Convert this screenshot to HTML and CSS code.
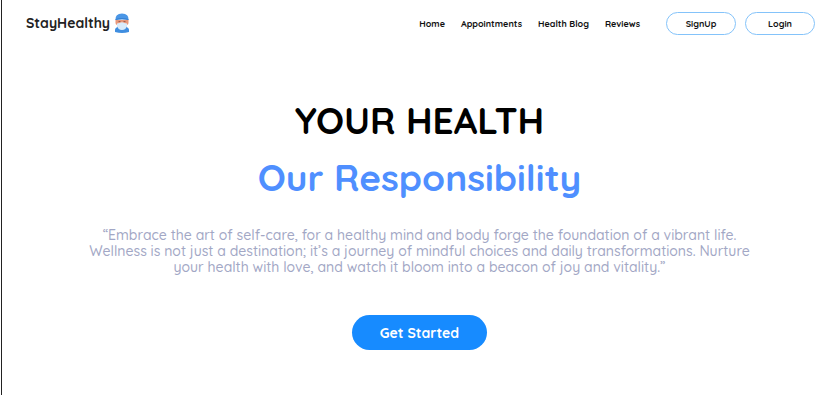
FILE: index.html
```html
<!DOCTYPE html>
<html lang="en">
<head>
<meta charset="utf-8">
<meta name="viewport" content="width=device-width, initial-scale=1">
<title>StayHealthy</title>
<link rel="stylesheet" href="styles.css">
</head>
<body>
<div class="page">
  <header class="header">
    <a class="brand" href="#">StayHealthy
      <svg class="brand-icon" viewBox="0 0 32 40" aria-hidden="true">
        <path d="M2 38v-4q0-5 8-7h12q8 2 8 7v4q-14 4-28 0z" fill="#3f8ee0"/>
        <path d="M3 14h26v6q0 3-3 4-2 8-10 8T6 24q-3-1-3-4z" fill="#e9987a"/>
        <path d="M9 16h4v2H9zM19 16h4v2h-4z" fill="#9a6055"/>
        <path d="M6 21l5-1q5-3 10 0l5 1v4q-2 9-10 9T6 25z" fill="#d9ebfb"/>
        <path d="M3 14Q2 1 16 1t13 13q-13-3-26 0z" fill="#4a96e6"/>
        <path d="M3 12q13-4 26 0v2q-13-3-26 0z" fill="#3580d2"/>
      </svg>
    </a>
    <nav class="nav">
      <a href="#">Home</a>
      <a href="#">Appointments</a>
      <a href="#">Health Blog</a>
      <a href="#">Reviews</a>
    </nav>
    <div class="actions">
      <button class="outline-button" type="button">SignUp</button>
      <button class="outline-button" type="button">Login</button>
    </div>
  </header>
  <main class="hero">
    <h1 class="title">YOUR HEALTH <span class="accent">Our Responsibility</span></h1>
    <p class="quote">“Embrace the art of self-care, for a healthy mind and body forge the foundation of a vibrant life. Wellness is not just a destination; it’s a journey of mindful choices and daily transformations. Nurture your health with love, and watch it bloom into a beacon of joy and vitality.”</p>
    <button class="cta" type="button">Get Started</button>
  </main>
</div>
</body>
</html>
```
FILE: styles.css
```css
* {
  box-sizing: border-box;
}

body {
  margin: 0;
  background: #fff;
  color: #000;
  font-family: Quicksand, Lato, sans-serif;
}

.page {
  min-height: calc(100vh - 5px);
  margin-left: 1px;
  border-left: 1px solid #222;
}

.header {
  display: flex;
  align-items: center;
  padding: 11px 22px 0 24px;
}

.brand {
  display: flex;
  align-items: center;
  gap: 4px;
  margin-right: auto;
  color: #222;
  font-size: 14px;
  line-height: 24px;
  font-weight: 700;
  text-decoration: none;
}

.brand-icon {
  width: 16px;
  height: 20px;
}

.nav {
  display: flex;
  gap: 16px;
  margin-right: 26px;
}

.nav a {
  color: #111;
  font-size: 9px;
  font-weight: 700;
  text-decoration: none;
}

.actions {
  display: flex;
  gap: 9px;
}

.outline-button {
  width: 70px;
  height: 23px;
  padding: 0;
  border: 1px solid #84c3fa;
  border-radius: 12px;
  background: #fff;
  color: #111;
  font: inherit;
  font-size: 9px;
  font-weight: 700;
}

.hero {
  padding: 57px 16px 0;
  text-align: center;
}

.title {
  margin: 0;
  font-size: 37px;
  line-height: 57px;
  font-weight: 700;
}

.accent {
  display: block;
  color: #4f8fff;
}

.quote {
  max-width: 672px;
  margin: 21px auto 40px;
  color: #a2a7c5;
  font-size: 14px;
  line-height: 16px;
  font-weight: 500;
}

.cta {
  width: 135px;
  height: 35px;
  padding: 0;
  border: 0;
  border-radius: 18px;
  background: #178bff;
  color: #fff;
  font: inherit;
  font-size: 14px;
  font-weight: 700;
}
```
